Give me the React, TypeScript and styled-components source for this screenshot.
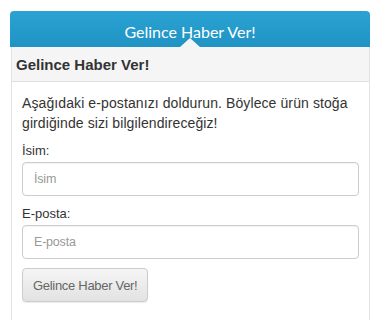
import React from "react";
import styled, { createGlobalStyle } from "styled-components";

const Global = createGlobalStyle`
  html, body { margin: 0; padding: 0; background: #fff; }
  body { font-family: "Liberation Sans", Arial, sans-serif; color: #333; }
  * { box-sizing: border-box; }
`;

const Wrap = styled.div`
  padding: 11px 11px 0 10px;
  width: 381px;
`;

const Tab = styled.div`
  position: relative;
  height: 36px;
  border-radius: 4px 4px 0 0;
  background: linear-gradient(to bottom, #2aa3d3 0%, #1f93c4 100%);
  color: #fff;
  font-family: Lato, "Open Sans", sans-serif;
  font-size: 16px;
  display: flex;
  align-items: center;
  justify-content: center;
  padding-top: 4px;
`;

const Arrow = styled.span`
  position: absolute;
  left: 50%;
  bottom: 0;
  margin-left: -10px;
  width: 0;
  height: 0;
  border-left: 10px solid transparent;
  border-right: 10px solid transparent;
  border-bottom: 9px solid #f5f5f5;
`;

const Panel = styled.div`
  margin-left: 1px;
  border: 1px solid #e3e3e3;
  border-top: none;
  background: #fff;
`;

const Header = styled.div`
  background: #f5f5f5;
  border-bottom: 1px solid #e0e0e0;
  height: 35px;
  display: flex;
  align-items: center;
  padding: 0 4px;
  font-weight: bold;
  font-size: 15px;
  color: #333;
`;

const Body = styled.div`
  padding: 11px 10px 20px 10px;
  font-size: 14px;
  line-height: 20px;
`;

const Intro = styled.p`
  margin: 0 0 8px 0;
  letter-spacing: 0.1px;
`;

const Label = styled.label`
  display: block;
  font-size: 13px;
  margin-bottom: 1px;
`;

const Input = styled.input`
  display: block;
  width: 100%;
  height: 34px;
  padding: 6px 11px;
  border: 1px solid #ccc;
  border-radius: 4px;
  font-family: "Liberation Sans", Arial, sans-serif;
  font-size: 12.5px;
  letter-spacing: -0.2px;
  color: #555;
  box-shadow: inset 0 1px 1px rgba(0,0,0,0.05);
  margin-bottom: 8px;
  &::placeholder { color: #999; }
`;

const Button = styled.button`
  margin-top: 1px;
  height: 34px;
  padding: 0 10px;
  border: 1px solid #ccc;
  border-radius: 4px;
  background: linear-gradient(to bottom, #f5f5f5 0%, #e2e2e2 100%);
  box-shadow: 0 1px 1px rgba(0,0,0,0.08);
  font-family: "Liberation Sans", Arial, sans-serif;
  font-size: 13px;
  letter-spacing: -0.3px;
  color: #666;
`;

export default function App() {
  return (
    <>
      <Global />
      <Wrap>
        <Tab>
          Gelince Haber Ver!
          <Arrow />
        </Tab>
        <Panel>
          <Header>Gelince Haber Ver!</Header>
          <Body>
            <Intro>
              Aşağıdaki e-postanızı doldurun. Böylece ürün stoğa girdiğinde sizi bilgilendireceğiz!
            </Intro>
            <Label>İsim:</Label>
            <Input placeholder="İsim" />
            <Label>E-posta:</Label>
            <Input placeholder="E-posta" />
            <Button>Gelince Haber Ver!</Button>
          </Body>
        </Panel>
      </Wrap>
    </>
  );
}
